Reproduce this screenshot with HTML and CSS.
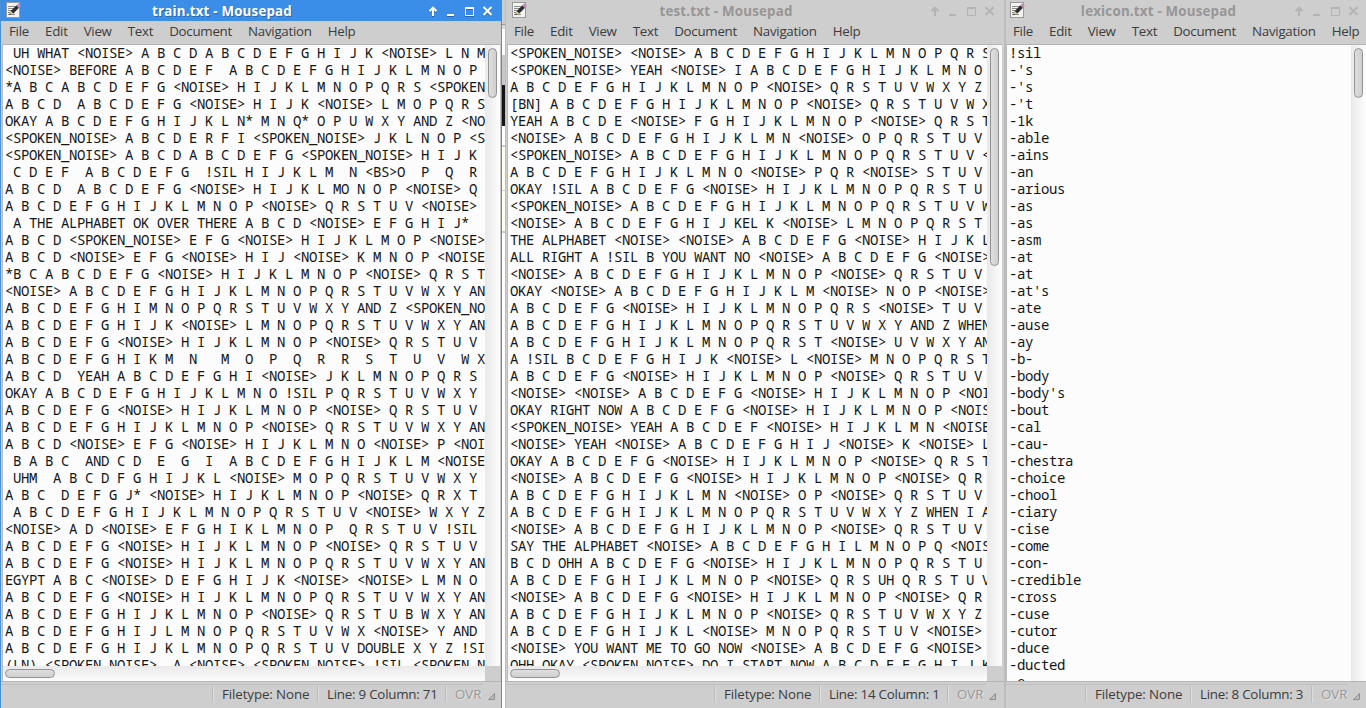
FILE: index.html
```html
<!DOCTYPE html>
<html lang="en">
<head>
<meta charset="utf-8">
<title>Mousepad</title>
<link rel="stylesheet" href="styles.css">
</head>
<body>
<svg class="defs" width="0" height="0">
  <symbol id="pad" viewBox="0 0 16 16">
    <rect x="1.500" y=".5" width="13" height="15" fill="#f3f3f1" stroke="#9a9a98"/>
    <path d="M3 4.500h8M3 6.500h6M3 8.500h5M3 10.500h3M3 12.500h7" stroke="#8c8c8c"/>
    <path d="M13 4.200L6.800 10.400" stroke="#2b2d2e" stroke-width="3.600"/>
    <path d="M5.600 8.900l2.700 2.700-4 1.300z" fill="#d9cf7c"/>
    <path d="M4.900 11.200l-.8 2 2-.7z" fill="#333"/>
    <path d="M12.500 4.700l2.200-2.200" stroke="#c98bc0" stroke-width="3.600"/>
  </symbol>
  <symbol id="controls" viewBox="0 0 66 14">
    <path d="M7 12V4M3.500 7.200L7 3.600l3.500 3.600" fill="none" stroke="currentColor" stroke-width="2"/>
    <path d="M21 11h7" stroke="currentColor" stroke-width="2"/>
    <path d="M39.500 4v7.500h8V4" fill="none" stroke="currentColor"/>
    <path d="M39 4h9" stroke="currentColor" stroke-width="2"/>
    <path d="M57.500 3l8 8M65.500 3l-8 8" stroke="currentColor" stroke-width="2"/>
  </symbol>
</svg>
<main class="desktop">
  <section class="window train active">
    <header class="titlebar"><svg class="app-icon"><use href="#pad"/></svg><h1 class="title">train.txt - Mousepad</h1><svg class="controls"><use href="#controls"/></svg></header>
    <nav class="menu"><span>File</span><span>Edit</span><span>View</span><span>Text</span><span>Document</span><span>Navigation</span><span>Help</span></nav>
    <div class="editor">
<pre class="text"> UH WHAT &lt;NOISE&gt; A B C D A B C D E F G H I J K &lt;NOISE&gt; L N M
&lt;NOISE&gt; BEFORE A B C D E F  A B C D E F G H I J K L M N O P
*A B C A B C D E F G &lt;NOISE&gt; H I J K L M N O P Q R S &lt;SPOKEN
A B C D  A B C D E F G &lt;NOISE&gt; H I J K &lt;NOISE&gt; L M O P Q R S
OKAY A B C D E F G H I J K L N* M N Q* O P U W X Y AND Z &lt;NO
&lt;SPOKEN_NOISE&gt; A B C D E R F I &lt;SPOKEN_NOISE&gt; J K L N O P &lt;S
&lt;SPOKEN_NOISE&gt; A B C D A B C D E F G &lt;SPOKEN_NOISE&gt; H I J K
 C D E F  A B C D E F G  !SIL H I J K L M  N &lt;BS&gt;O  P  Q  R
A B C D  A B C D E F G &lt;NOISE&gt; H I J K L MO N O P &lt;NOISE&gt; Q
A B C D E F G H I J K L M N O P &lt;NOISE&gt; Q R S T U V &lt;NOISE&gt;
 A THE ALPHABET OK OVER THERE A B C D &lt;NOISE&gt; E F G H I J*
A B C D &lt;SPOKEN_NOISE&gt; E F G &lt;NOISE&gt; H I J K L M O P &lt;NOISE&gt;
A B C D &lt;NOISE&gt; E F G &lt;NOISE&gt; H I J &lt;NOISE&gt; K M N O P &lt;NOISE
*B C A B C D E F G &lt;NOISE&gt; H I J K L M N O P &lt;NOISE&gt; Q R S T
&lt;NOISE&gt; A B C D E F G H I J K L M N O P Q R S T U V W X Y AN
A B C D E F G H I M N O P Q R S T U V W X Y AND Z &lt;SPOKEN_NO
A B C D E F G H I J K &lt;NOISE&gt; L M N O P Q R S T U V W X Y AN
A B C D E F G &lt;NOISE&gt; H I J K L M N O P &lt;NOISE&gt; Q R S T U V
A B C D E F G H I K M  N   M  O  P  Q  R  R  S  T  U  V  W X
A B C D  YEAH A B C D E F G H I &lt;NOISE&gt; J K L M N O P Q R S
OKAY A B C D E F G H I J K L M N O !SIL P Q R S T U V W X Y
A B C D E F G &lt;NOISE&gt; H I J K L M N O P &lt;NOISE&gt; Q R S T U V
A B C D E F G H I J K L M N O P &lt;NOISE&gt; Q R S T U V W X Y AN
A B C D &lt;NOISE&gt; E F G &lt;NOISE&gt; H I J K L M N O &lt;NOISE&gt; P &lt;NOI
 B A B C  AND C D  E  G  I  A B C D E F G H I J K L M &lt;NOISE
 UHM  A B C D F G H I J K L &lt;NOISE&gt; M O P Q R S T U V W X Y
A B C  D E F G J* &lt;NOISE&gt; H I J K L M N O P &lt;NOISE&gt; Q R X T
 A B C D E F G H I J K L M N O P Q R S T U V &lt;NOISE&gt; W X Y Z
&lt;NOISE&gt; A D &lt;NOISE&gt; E F G H I K L M N O P  Q R S T U V !SIL
A B C D E F G &lt;NOISE&gt; H I J K L M N O P &lt;NOISE&gt; Q R S T U V
A B C D E F G &lt;NOISE&gt; H I J K L M N O P Q R S T U V W X Y AN
EGYPT A B C &lt;NOISE&gt; D E F G H I J K &lt;NOISE&gt; &lt;NOISE&gt; L M N O
A B C D E F G &lt;NOISE&gt; H I J K L M N O P Q R S T U V W X Y AN
A B C D E F G H I J K L M N O P &lt;NOISE&gt; Q R S T U B W X Y AN
A B C D E F G H I J L M N O P Q R S T U V W X &lt;NOISE&gt; Y AND
A B C D E F G H I J K L M N O P Q R S T U V DOUBLE X Y Z !SI
(LN) &lt;SPOKEN_NOISE&gt;  A &lt;NOISE&gt; &lt;SPOKEN_NOISE&gt; !SIL &lt;SPOKEN_N</pre>
      <div class="vbar"><i class="thumb"></i></div>
      <div class="hbar"><i class="thumb"></i></div>
      <div class="corner"></div>
    </div>
    <footer class="status"><span class="type">Filetype: None</span><span class="pos">Line: 9 Column: 71</span><span class="ovr">OVR</span><svg class="grip" viewBox="0 0 7 7"><path d="M6.500 .5v6h-6z"/></svg></footer>
  </section>
  <div class="backdrop"></div>
  <section class="window test">
    <header class="titlebar"><svg class="app-icon"><use href="#pad"/></svg><h1 class="title">test.txt - Mousepad</h1><svg class="controls"><use href="#controls"/></svg></header>
    <nav class="menu"><span>File</span><span>Edit</span><span>View</span><span>Text</span><span>Document</span><span>Navigation</span><span>Help</span></nav>
    <div class="editor">
<pre class="text">&lt;SPOKEN_NOISE&gt; &lt;NOISE&gt; A B C D E F G H I J K L M N O P Q R S
&lt;SPOKEN_NOISE&gt; YEAH &lt;NOISE&gt; I A B C D E F G H I J K L M N O
A B C D E F G H I J K L M N O P &lt;NOISE&gt; Q R S T U V W X Y Z
[BN] A B C D E F G H I J K L M N O P &lt;NOISE&gt; Q R S T U V W X
YEAH A B C D E &lt;NOISE&gt; F G H I J K L M N O P &lt;NOISE&gt; Q R S T
&lt;NOISE&gt; A B C D E F G H I J K L M N &lt;NOISE&gt; O P Q R S T U V
&lt;SPOKEN_NOISE&gt; A B C D E F G H I J K L M N O P Q R S T U V &lt;
A B C D E F G H I J K L M N O &lt;NOISE&gt; P Q R &lt;NOISE&gt; S T U V
OKAY !SIL A B C D E F G &lt;NOISE&gt; H I J K L M N O P Q R S T U
&lt;SPOKEN_NOISE&gt; A B C D E F G H I J K L M N O P Q R S T U V W
&lt;NOISE&gt; A B C D E F G H I J KEL K &lt;NOISE&gt; L M N O P Q R S T
THE ALPHABET &lt;NOISE&gt; &lt;NOISE&gt; A B C D E F G &lt;NOISE&gt; H I J K L
ALL RIGHT A !SIL B YOU WANT NO &lt;NOISE&gt; A B C D E F G &lt;NOISE&gt;
&lt;NOISE&gt; A B C D E F G H I J K L M N O P &lt;NOISE&gt; Q R S T U V
OKAY &lt;NOISE&gt; A B C D E F G H I J K L M &lt;NOISE&gt; N O P &lt;NOISE&gt;
A B C D E F G &lt;NOISE&gt; H I J K L M N O P Q R S &lt;NOISE&gt; T U V
A B C D E F G H I J K L M N O P Q R S T U V W X Y AND Z WHEN
A B C D E F G H I J K L M N O P Q R S T &lt;NOISE&gt; U V W X Y AN
A !SIL B C D E F G H I J K &lt;NOISE&gt; L &lt;NOISE&gt; M N O P Q R S T
A B C D E F G &lt;NOISE&gt; H I J K L M N O P &lt;NOISE&gt; Q R S T U V
&lt;NOISE&gt; &lt;NOISE&gt; A B C D E F G &lt;NOISE&gt; H I J K L M N O P &lt;NOI
OKAY RIGHT NOW A B C D E F G &lt;NOISE&gt; H I J K L M N O P &lt;NOIS
&lt;SPOKEN_NOISE&gt; YEAH A B C D E F &lt;NOISE&gt; H I J K L M N &lt;NOISE
&lt;NOISE&gt; YEAH &lt;NOISE&gt; A B C D E F G H I J &lt;NOISE&gt; K &lt;NOISE&gt; L
OKAY A B C D E F G &lt;NOISE&gt; H I J K L M N O P &lt;NOISE&gt; Q R S T
&lt;NOISE&gt; A B C D E F G &lt;NOISE&gt; H I J K L M N O P &lt;NOISE&gt; Q R
A B C D E F G H I J K L M N &lt;NOISE&gt; O P &lt;NOISE&gt; Q R S T U V
A B C D E F G H I J K L M N O P Q R S T U V W X Y Z WHEN I A
&lt;NOISE&gt; A B C D E F G H I J K L M N O P &lt;NOISE&gt; Q R S T U V
SAY THE ALPHABET &lt;NOISE&gt; A B C D E F G H I L M N O P Q &lt;NOIS
B C D OHH A B C D E F G &lt;NOISE&gt; H I J K L M N O P Q R S T U
A B C D E F G H I J K L M N O P &lt;NOISE&gt; Q R S UH Q R S T U V
&lt;NOISE&gt; A B C D E F G &lt;NOISE&gt; H I J K L M N O P &lt;NOISE&gt; Q R
A B C D E F G H I J K L M N O P &lt;NOISE&gt; Q R S T U V W X Y Z
A B C D E F G H I J K L &lt;NOISE&gt; M N O P Q R S T U V &lt;NOISE&gt;
&lt;NOISE&gt; YOU WANT ME TO GO NOW &lt;NOISE&gt; A B C D E F G &lt;NOISE&gt;
OHH OKAY &lt;SPOKEN_NOISE&gt; DO I START NOW A B C D E F G H I J K</pre>
      <div class="vbar"><i class="thumb"></i></div>
      <div class="hbar"><i class="thumb"></i></div>
      <div class="corner"></div>
    </div>
    <footer class="status"><span class="type">Filetype: None</span><span class="pos">Line: 14 Column: 1</span><span class="ovr">OVR</span><svg class="grip" viewBox="0 0 7 7"><path d="M6.500 .5v6h-6z"/></svg></footer>
  </section>
  <section class="window lexicon">
    <header class="titlebar"><svg class="app-icon"><use href="#pad"/></svg><h1 class="title">lexicon.txt - Mousepad</h1><svg class="controls"><use href="#controls"/></svg></header>
    <nav class="menu"><span>File</span><span>Edit</span><span>View</span><span>Text</span><span>Document</span><span>Navigation</span><span>Help</span></nav>
    <div class="editor">
<pre class="text">!sil
-'s
-'s
-'t
-1k
-able
-ains
-an
-arious
-as
-as
-asm
-at
-at
-at's
-ate
-ause
-ay
-b-
-body
-body's
-bout
-cal
-cau-
-chestra
-choice
-chool
-ciary
-cise
-come
-con-
-credible
-cross
-cuse
-cutor
-duce
-ducted
-e</pre>
      <div class="vbar"><i class="thumb"></i></div>
    </div>
    <footer class="status"><span class="type">Filetype: None</span><span class="pos">Line: 8 Column: 3</span><span class="ovr">OVR</span><svg class="grip" viewBox="0 0 7 7"><path d="M6.500 .5v6h-6z"/></svg></footer>
  </section>
</main>
</body>
</html>
```
FILE: styles.css
```css
* { box-sizing: border-box; }
body { margin: 0; overflow: hidden; font: 13.333px/18px "Open Sans", "Noto Sans", sans-serif; color: #3c3c3c; }
.defs { display: block; height: 0; }
.desktop { display: flex; width: 1366px; height: 708px; background: #fff; }

.window { display: flex; flex-direction: column; flex: none; background: #cecece; }
.train { width: 502px; border-left: 1px solid #4a90d9; border-right: 1px solid #4a90d9; }
.test { width: 499px; border-left: 1px solid #bdbdbd; }
.lexicon { width: 362px; border-left: 2px solid #bcbcbc; }

.backdrop {
  width: 3px;
  flex: none;
  background: linear-gradient(#ccc 0 24px, #999 24px 25px, #ddd 25px 29px, #fff 29px 55px, #c8c8c8 55px 85px, #151515 85px 126px, #fff 126px 145px, #ccc 145px 147px, #fffff0 147px 190px, #ccc 190px 191px, #fffff0 191px 231px, #ccc 231px 233px, #fff 233px);
}

.titlebar { display: flex; align-items: center; height: 21px; flex: none; color: #b4b4b4; padding: 0 10px 0 4px; }
.train .titlebar { background: #3b8ee7; color: #fff; margin: 0 -1px 0 0; }
.test .titlebar { padding-left: 5px; }
.lexicon .titlebar { padding: 0 8px 0 3px; }
.app-icon { width: 16px; height: 16px; flex: none; margin-bottom: 1px; }
.title { flex: 1; margin: 0; padding: 0 3px 0 0; text-align: center; font: bold 13.333px/18px "Open Sans", "Noto Sans", sans-serif; letter-spacing: 0.2px; color: #969696; white-space: nowrap; }
.train .title { padding-right: 3px; color: #fff; text-shadow: 1px 1px 0 #2a66a6; }
.lexicon .title { padding-right: 0; }
.controls { width: 66px; height: 14px; flex: none; margin-top: 1px; }
.train .controls { filter: drop-shadow(0 1px 0 #2a66a6); }

.menu { display: flex; height: 23px; flex: none; padding: 1px 0 0 8px; white-space: nowrap; letter-spacing: -0.27px; }
.menu span { margin-right: 16px; }
.menu span:last-child { margin-right: 0; }
.lexicon .menu { padding-left: 7px; }

.editor {
  display: grid;
  grid-template-columns: minmax(0, 1fr) 15px;
  grid-template-rows: minmax(0, 1fr) 15px;
  height: 637px;
  flex: none;
  border-top: 1px solid #b5b5b5;
  margin-left: 1px;
  border-left: 1px solid #bbb;
  background: #fcfcfc;
}
.train .editor { border-right: 1px solid #c6c6c6; }
.test .editor { margin-right: 2px; }
.lexicon .editor { margin-left: 0; grid-template-rows: minmax(0, 1fr); }
.text {
  margin: -1px 0 0;
  padding-left: 2px;
  overflow: hidden;
  font: 14px/17px "Droid Sans Mono", "Noto Mono", "Noto Sans Mono", "DejaVu Sans Mono", monospace;
  letter-spacing: -0.4px;
  color: #151515;
}
.vbar { background: linear-gradient(90deg, #e9e9e9, #fdfdfd); padding: 3px; }
.hbar { background: linear-gradient(#e9e9e9, #fdfdfd); padding: 3px 2px; }
.corner { background: #cecece; }
.thumb { display: block; border: 1px solid #929292; border-radius: 5px; }
.vbar .thumb { width: 9px; height: 50px; background: linear-gradient(90deg, #dedede, #cfcfcf); }
.test .vbar .thumb { height: 218px; }
.hbar .thumb { width: 50px; height: 9px; background: linear-gradient(#dedede, #cfcfcf); }

.status {
  display: flex;
  flex: 1;
  justify-content: flex-end;
  border-top: 1px solid #b5b5b5;
  padding: 4px 6px 0 0;
  white-space: nowrap;
  background: linear-gradient(#c0c0c0, #c0c0c0) 0 2px / calc(100% - 18px) 1px no-repeat;
}
.test .status { padding-right: 8px; }
.status span { height: 16px; border-left: 1px solid #bababa; padding-left: 9px; box-shadow: inset 1px 0 #dedede; line-height: 17px; }
.status .type { width: 105px; letter-spacing: -0.1px; }
.status .pos { width: 128px; letter-spacing: -0.23px; }
.lexicon .status .pos { width: 121px; }
.status .ovr { width: 43px; color: #999; text-shadow: 1px 1px #e6e6e6; }
.test .status .ovr, .lexicon .status .ovr { width: 42px; }
.grip { width: 7px; height: 7px; margin-top: 7px; fill: #bbb; stroke: #909090; }
```
